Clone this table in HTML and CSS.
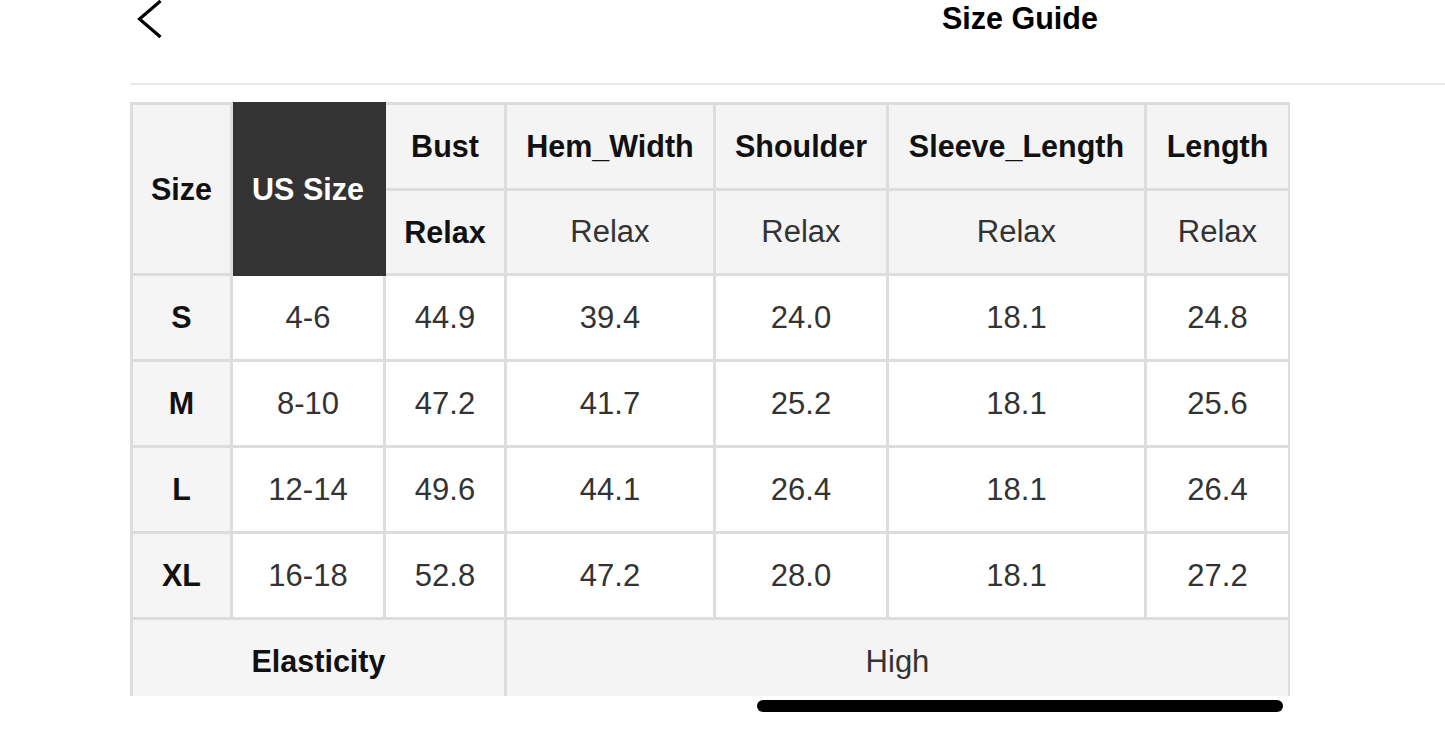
FILE: index.html
```html
<!DOCTYPE html>
<html>
<head>
<meta charset="utf-8">
<link rel="stylesheet" href="styles.css">
</head>
<body>
<div class="page">
  <header class="topbar">
    <svg class="back" width="26" height="40" viewBox="0 0 26 40"><path d="M23.5 1 L2.5 19 L23.5 37" fill="none" stroke="#000" stroke-width="3.2"/></svg>
    <h1 class="title">Size Guide</h1>
  </header>
  <div class="rule"></div>
  <div class="table-wrap">
    <table class="sizes">
      <colgroup>
        <col style="width:100px"><col style="width:153px"><col style="width:121px"><col style="width:209px"><col style="width:173px"><col style="width:258px"><col style="width:144px">
      </colgroup>
      <tr class="h1">
        <th rowspan="2" class="hd">Size</th>
        <th rowspan="2" class="dark">US Size</th>
        <th class="hd">Bust</th>
        <th class="hd">Hem_Width</th>
        <th class="hd">Shoulder</th>
        <th class="hd">Sleeve_Length</th>
        <th class="hd">Length</th>
      </tr>
      <tr class="h2">
        <th class="hd">Relax</th>
        <td class="hd thin">Relax</td>
        <td class="hd thin">Relax</td>
        <td class="hd thin">Relax</td>
        <td class="hd thin">Relax</td>
      </tr>
      <tr><th class="lab">S</th><td>4-6</td><td>44.9</td><td>39.4</td><td>24.0</td><td>18.1</td><td>24.8</td></tr>
      <tr><th class="lab">M</th><td>8-10</td><td>47.2</td><td>41.7</td><td>25.2</td><td>18.1</td><td>25.6</td></tr>
      <tr><th class="lab">L</th><td>12-14</td><td>49.6</td><td>44.1</td><td>26.4</td><td>18.1</td><td>26.4</td></tr>
      <tr><th class="lab">XL</th><td>16-18</td><td>52.8</td><td>47.2</td><td>28.0</td><td>18.1</td><td>27.2</td></tr>
      <tr class="el"><th colspan="3" class="lab">Elasticity</th><td colspan="4" class="hd thin">High</td></tr>
    </table>
  </div>
  <div class="home"></div>
</div>
</body>
</html>
```

FILE: styles.css
```css
html, body {
  margin: 0;
  padding: 0;
  background: #fff;
}
.page {
  width: 1445px;
  height: 729px;
  overflow: hidden;
  font-family: "Liberation Sans", Arial, Helvetica, sans-serif;
  color: #111;
}
.topbar {
  display: flex;
  align-items: flex-start;
  height: 83px;
  padding-left: 137px;
}
.back {
  display: block;
  margin-top: 0;
}
.title {
  margin: 1px 0 0 779px;
  font-size: 30.5px;
  font-weight: bold;
  line-height: 34px;
  color: #000;
}
.rule {
  margin-left: 130px;
  height: 2px;
  background: #e8e8e8;
}
.table-wrap {
  margin: 17px 0 0 130px;
  width: 1160px;
  height: 594px;
  overflow: hidden;
}
.sizes {
  border-collapse: collapse;
  table-layout: fixed;
  width: 1158px;
  border: 2px solid #dedede;
}
.sizes th, .sizes td {
  border: 3px solid #dddddd;
  padding: 0;
  text-align: center;
  vertical-align: middle;
  font-size: 30.5px;
  height: 83px;
}
.sizes td {
  color: #333;
  font-weight: normal;
  background: #fff;
  font-size: 31px;
}
.sizes th {
  color: #111;
  font-weight: bold;
}
.sizes .hd {
  background: #f4f4f4;
}
.sizes .thin {
  font-weight: normal;
  color: #333;
}
.sizes .lab {
  background: #f5f5f5;
}
.sizes .dark {
  background: #333333;
  color: #fff;
  border-color: #333333;
}
.h1 th, .h1 td {
  height: 83px;
}
.h2 th, .h2 td {
  height: 82px;
}
.home {
  margin: 4px 0 0 757px;
  width: 526px;
  height: 12px;
  border-radius: 6px;
  background: #000;
}
```
